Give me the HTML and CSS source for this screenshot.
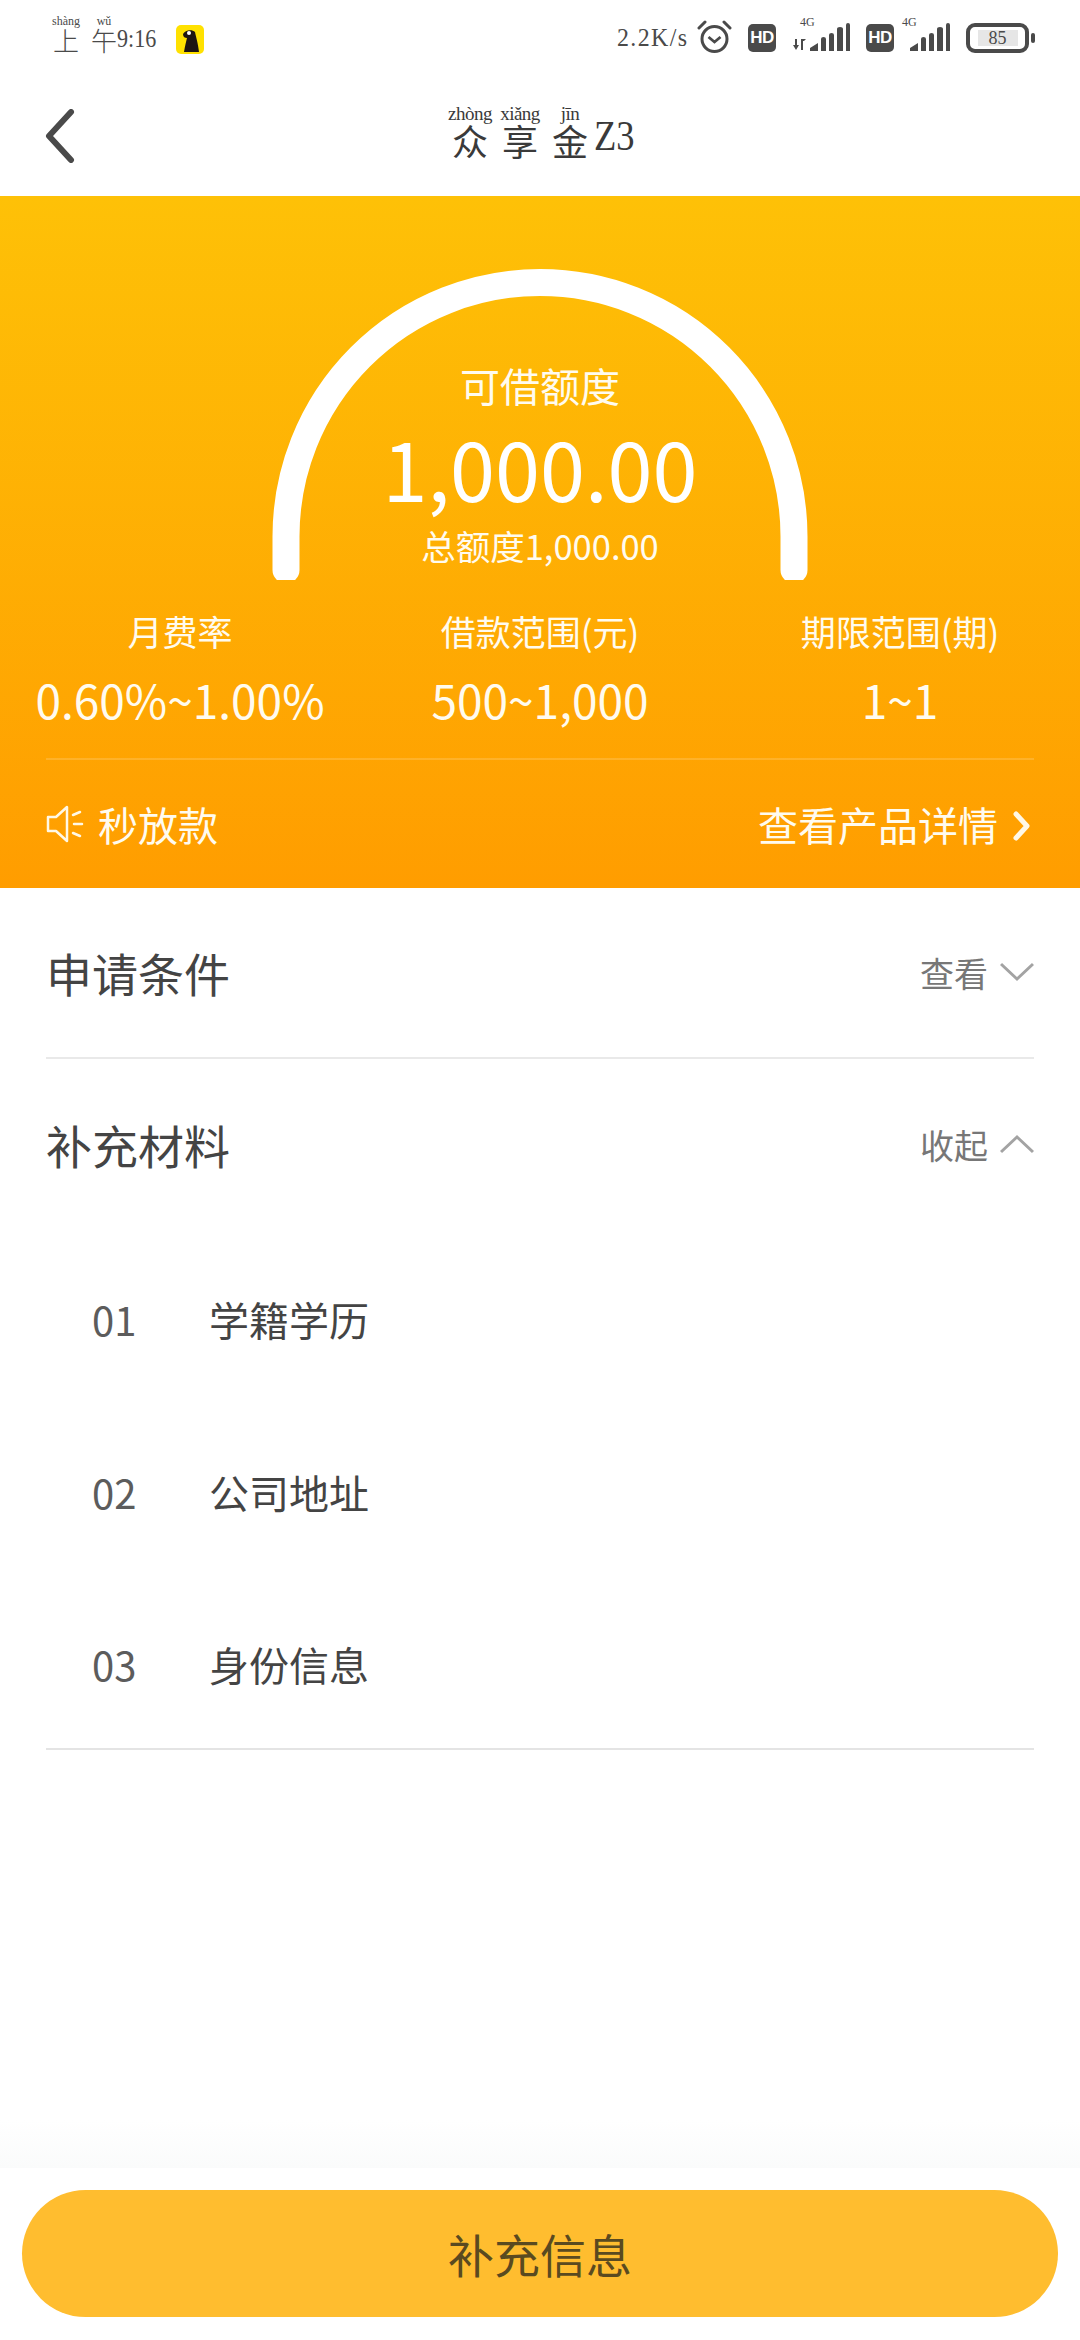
FILE: index.html
```html
<!DOCTYPE html>
<html lang="zh-CN">
<head>
<meta charset="utf-8">
<title>众享金Z3</title>
<link rel="stylesheet" href="styles.css">
</head>
<body>
<div class="app">
  <header class="status">
    <div class="status-left">
      <span class="py-time"><ruby>上<rt>shàng</rt></ruby><ruby>午<rt>wǔ</rt></ruby></span><span class="clock">9:16</span>
      <svg class="app-icon" viewBox="0 0 28 29"><rect width="28" height="29" rx="5" fill="#ffe100"/><path d="M7 9c2-4 9-5 12-2 1 5 3 11 4 20H8c1-6 2-10 3-14-2 0-4-1-4-4z" fill="#1d1412"/><circle cx="13" cy="8" r="2" fill="#fff"/></svg>
    </div>
    <div class="status-right">
      <span class="speed">2.2K/s</span>
      <svg class="alarm" viewBox="0 0 35 35" fill="none" stroke="#4a4a4a" stroke-width="3"><circle cx="17.500" cy="20" r="12.500"/><path d="M11.500 18l6 5 6-5" stroke-width="2.800"/><path d="M2 9l6-6M33 9l-6-6" stroke-linecap="round"/></svg>
      <span class="hd">HD</span>
      <span class="signal">
        <span class="four-g">4G</span>
        <svg class="sig-a" viewBox="0 0 57 30" fill="#4a4a4a"><path d="M2 16h2v6h2l-3 5-3-5h2zM8 27V16h5l-2 2h-1v9zM17 28v-3l8-5v8zM28 28V16q0-2 2.500-2t2.500 2v12zM36 28V12q0-2 2.500-2t2.500 2v16zM44 28V6q0-2 3-2t3 2v22zM53 28V2q0-2 2-2t2 2v26z"/></svg>
      </span>
      <span class="hd">HD</span>
      <span class="signal">
        <span class="four-g second">4G</span>
        <svg class="sig-b" viewBox="0 0 40 30" fill="#4a4a4a"><path d="M0 28v-3l8-5v8zM11 28V16q0-2 2.500-2t2.500 2v12zM19 28V12q0-2 2.500-2t2.500 2v16zM27 28V6q0-2 3-2t3 2v22zM36 28V2q0-2 2-2t2 2v26z"/></svg>
      </span>
      <span class="battery"><span class="level">85</span></span><span class="nub"></span>
    </div>
  </header>

  <nav class="nav">
    <svg class="back" viewBox="0 0 30 54" fill="none" stroke="#4a4a4a" stroke-width="6" stroke-linecap="round" stroke-linejoin="round"><path d="M26 3L4 27l22 24"/></svg>
    <h1 class="title"><ruby>众<rt>zhòng</rt></ruby><ruby>享<rt>xiǎng</rt></ruby><ruby>金<rt>jīn</rt></ruby><span class="title-z">Z3</span></h1>
  </nav>

  <section class="hero">
    <div class="gauge">
      <svg class="arc" viewBox="0 0 540 311" fill="none" stroke="#fff" stroke-width="27" stroke-linecap="round"><path d="M16 301V267.500A254 254 0 0 1 524 267.500V301"/></svg>
      <div class="gauge-label">可借额度</div>
      <div class="gauge-value">1,000.00</div>
      <div class="gauge-total">总额度1,000.00</div>
    </div>
    <div class="stats">
      <div class="stat"><div class="stat-label">月费率</div><div class="stat-value">0.60%~1.00%</div></div>
      <div class="stat"><div class="stat-label">借款范围(元)</div><div class="stat-value">500~1,000</div></div>
      <div class="stat"><div class="stat-label">期限范围(期)</div><div class="stat-value">1~1</div></div>
    </div>
    <div class="hero-foot">
      <div class="notice">
        <svg class="speaker" viewBox="0 0 38 38" fill="none" stroke="#fff8e6" stroke-width="2.500" stroke-linejoin="round" stroke-linecap="round"><path d="M2 12h8L21 2v34L10 26H2z"/><path d="M27 10l7-3M28 19h8M27 28l7 3" /></svg>
        <span>秒放款</span>
      </div>
      <div class="detail-link">
        <span>查看产品详情</span>
        <svg class="chev-right" viewBox="0 0 20 32" fill="none" stroke="#fff8e6" stroke-width="5" stroke-linecap="round" stroke-linejoin="round"><path d="M4 4l11 12L4 28"/></svg>
      </div>
    </div>
  </section>

  <main class="content">
    <div class="row bordered">
      <span class="row-title">申请条件</span>
      <span class="row-action">查看<svg class="chev" viewBox="0 0 34 20" fill="none" stroke="#a3a3a3" stroke-width="3"><path d="M1 2l16 15L33 2"/></svg></span>
    </div>
    <div class="row">
      <span class="row-title">补充材料</span>
      <span class="row-action">收起<svg class="chev" viewBox="0 0 34 20" fill="none" stroke="#a3a3a3" stroke-width="3"><path d="M1 18L17 3l16 15"/></svg></span>
    </div>
    <ol class="materials">
      <li class="material"><span class="num">01</span><span>学籍学历</span></li>
      <li class="material"><span class="num">02</span><span>公司地址</span></li>
      <li class="material"><span class="num">03</span><span>身份信息</span></li>
    </ol>
  </main>

  <footer class="footer">
    <button class="submit">补充信息</button>
  </footer>
</div>
</body>
</html>
```
FILE: styles.css
```css
* { box-sizing: border-box; margin: 0; padding: 0; }
html, body { background: #fff; }
body {
  width: 1080px;
  height: 2340px;
  overflow: hidden;
  font-family: "Noto Sans CJK SC", "Noto Sans", sans-serif;
  color: #444;
}
.app { display: flex; flex-direction: column; height: 2340px; }

/* status bar */
.status {
  height: 76px;
  padding: 13px 45px 0 52px;
  display: flex;
  justify-content: space-between;
  align-items: flex-start;
  font-family: "Liberation Serif", "Noto Sans CJK SC", serif;
  color: #4a4a4a;
}
.status-left { display: flex; align-items: flex-end; height: 40px; }
.py-time { display: flex; gap: 11px; font-size: 26px; line-height: 26px; width: 65px; font-family: "Noto Sans CJK SC", sans-serif; font-weight: 300; }
.py-time rt { font-size: 12px; line-height: 10px; font-family: "Liberation Serif", serif; }
.clock { font-size: 26px; line-height: 28px; width: 59px; transform: scaleX(.85); transform-origin: left; }
.app-icon { width: 28px; height: 29px; margin-bottom: -1px; }
.status-right { display: flex; align-items: center; height: 40px; margin-top: 5px; }
.speed { font-size: 26px; width: 80px; letter-spacing: 1.500px; transform: scaleX(.92); transform-origin: left; }
.alarm { width: 35px; height: 35px; margin-right: 16px; margin-top: -4px; }
.hd {
  width: 28px; height: 28px; border-radius: 5px; background: #4a4a4a; color: #fff;
  font: bold 17px/28px "Liberation Sans", sans-serif; text-align: center; letter-spacing: -.5px;
}
.signal { position: relative; display: block; margin-left: 17px; margin-right: 16px; height: 30px; }
.sig-a { width: 57px; height: 30px; display: block; }
.sig-b { width: 40px; height: 30px; display: block; margin-left: -1px; }
.four-g { position: absolute; top: -7px; left: 7px; font-size: 12px; line-height: 12px; }
.four-g.second { left: -9px; }
.battery {
  width: 63px; height: 30px; border: 4px solid #4a4a4a; border-radius: 9px;
  display: flex; align-items: center; justify-content: center;
}
.level { width: 40px; height: 16px; background: #e6e6e6; font-size: 18px; line-height: 16px; text-align: center; }
.nub { width: 4px; height: 10px; margin-left: 2px; border-radius: 2px; background: #4a4a4a; }

/* nav */
.nav {
  height: 120px;
  padding-left: 45px;
  position: relative;
  display: flex;
  align-items: center;
}
.back { width: 30px; height: 54px; margin-top: 0; }
.title {
  position: absolute;
  left: 445px;
  top: 29px;
  display: flex;
  align-items: flex-end;
  font-weight: 400;
  font-size: 36px;
  line-height: 40px;
  color: #3a3a3a;
}
.title ruby { width: 50px; text-align: center; ruby-align: center; }
.title rt { font: 19px/16px "Liberation Serif", serif; letter-spacing: -.5px; }
.title-z { font: 42px/48px "Liberation Serif", serif; margin-left: -1px; transform: scaleX(.87); transform-origin: left; }

/* hero */
.hero {
  height: 692px;
  background: linear-gradient(#fec107, #ff9d00);
  color: #fffbef;
  padding-top: 73px;
  display: flex;
  flex-direction: column;
}
.gauge {
  width: 540px;
  height: 311px;
  margin: 0 auto;
  position: relative;
  text-align: center;
  padding-top: 87px;
  flex: none;
}
.arc { position: absolute; left: 0; top: 0; width: 540px; height: 311px; }
.gauge-label { font-size: 40px; line-height: 58px; }
.gauge-value { font-size: 81px; line-height: 100px; margin-top: 3px; color: #fff; }
.gauge-total { font-size: 34.500px; line-height: 46px; margin-top: 5px; }
.stats { display: grid; grid-template-columns: repeat(3, 360px); text-align: center; margin-top: 26px; }
.stat-label { font-size: 35px; line-height: 50px; }
.stat-value { font-size: 46px; line-height: 64px; margin-top: 11px; }
.hero-foot {
  margin: 27px 46px 0;
  border-top: 2px solid rgba(255,255,255,.16);
  display: flex;
  justify-content: space-between;
  align-items: center;
  padding-top: 34px;
  font-size: 40px;
  line-height: 60px;
}
.notice, .detail-link { display: flex; align-items: center; }
.speaker { width: 38px; height: 38px; margin-right: 14px; }
.chev-right { width: 20px; height: 32px; margin-left: 14px; margin-top: 4px; margin-right: 2px; }

/* content */
.content {
  flex: 1;
  padding: 0 46px;
  background: linear-gradient(#fff, #fafbfb) bottom / 100% 48px no-repeat;
}
.row {
  height: 116px;
  display: flex;
  justify-content: space-between;
  align-items: center;
}
.row.bordered { height: 171px; padding-top: 56px; padding-bottom: 57px; border-bottom: 2px solid #e9e9e9; }
.row:not(.bordered) { margin-top: 27px; height: 116px; }
.row-title { font-size: 46px; line-height: 60px; color: #444; }
.row-action { display: flex; align-items: center; font-size: 34px; color: #777; }
.chev { width: 34px; height: 20px; margin-left: 12px; }
.materials { list-style: none; padding-top: 60px; border-bottom: 2px solid #e4e4e4; height: 577px; margin-top: -29px; padding-bottom: 0; }
.material { display: flex; align-items: center; height: 172.500px; font-size: 40px; color: #444; padding-left: 46px; }
.num { width: 117px; color: #5c5c5c; }

/* footer */
.footer {
  height: 172px;
  padding: 22px 22px 0;
  background: #fff;
}
.submit {
  display: block;
  width: 1036px;
  height: 127px;
  border: 0;
  border-radius: 63.500px;
  background: #ffbd2f;
  color: #5a4a20;
  font: 46px/127px "Noto Sans CJK SC", sans-serif;
}
```
